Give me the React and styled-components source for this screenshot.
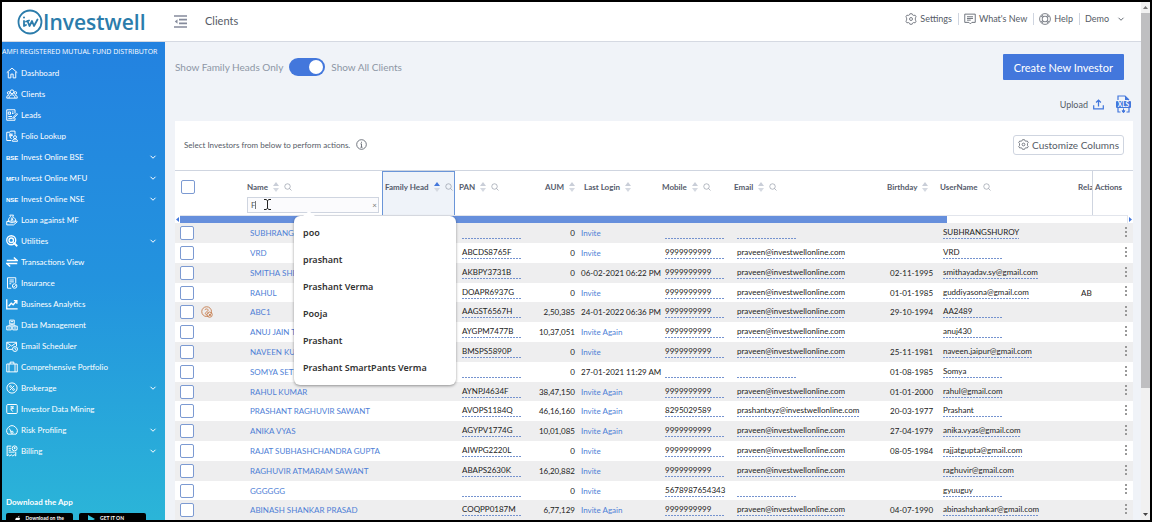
import React, { useState } from "react";
import styled, { createGlobalStyle, css } from "styled-components";

const GlobalStyle = createGlobalStyle`
  * {
    box-sizing: border-box;
  }

  body {
    margin: 0;
    background: #000;
    font-family: Lato, "Open Sans", sans-serif;
    color: #444;
  }

  button, input {
    font-family: inherit;
  }
`;

const COLOR = {
  blue: "#4377dc",
  link: "#4f7fd6",
  line: "#cfd5e0",
  text: "#555b66",
};

const menu = [
  { label: "Dashboard", icon: "home" },
  { label: "Clients", icon: "clients" },
  { label: "Leads", icon: "leads" },
  { label: "Folio Lookup", icon: "folio" },
  { label: "Invest Online BSE", tag: "BSE", open: true },
  { label: "Invest Online MFU", tag: "MFU", open: true },
  { label: "Invest Online NSE", tag: "NSE", open: true },
  { label: "Loan against MF", icon: "loan" },
  { label: "Utilities", icon: "utilities", open: true },
  { label: "Transactions View", icon: "transactions" },
  { label: "Insurance", icon: "insurance" },
  { label: "Business Analytics", icon: "analytics" },
  { label: "Data Management", icon: "data" },
  { label: "Email Scheduler", icon: "email" },
  { label: "Comprehensive Portfolio", icon: "portfolio" },
  { label: "Brokerage", icon: "brokerage", open: true },
  { label: "Investor Data Mining", icon: "mining" },
  { label: "Risk Profiling", icon: "risk", open: true },
  { label: "Billing", icon: "billing", open: true },
];

const P = "praveen@investwellonline.com";
const N = "9999999999";

const clients = [
  ["SUBHRANGSHU ROY", "", "0", "Invite", "", "", "", "SUBHRANGSHUROY"],
  ["VRD", "ABCDS8765F", "0", "Invite", N, P, "", "VRD"],
  ["SMITHA SHETTY", "AKBPY3731B", "0", "06-02-2021 06:22 PM", N, P, "02-11-1995", "smithayadav.sy@gmail.com"],
  ["RAHUL", "DOAPR6937G", "0", "Invite", N, P, "01-01-1985", "guddiyasona@gmail.com", "ABC1"],
  ["ABC1", "AAGST6567H", "2,50,385", "24-01-2022 06:36 PM", N, P, "29-10-1994", "AA2489"],
  ["ANUJ JAIN T", "AYGPM7477B", "10,37,051", "Invite Again", N, P, "", "anuj430"],
  ["NAVEEN KUMAR", "BMSPS5890P", "0", "Invite", N, P, "25-11-1981", "naveen.jaipur@gmail.com"],
  ["SOMYA SETHI", "", "0", "27-01-2021 11:29 AM", "", "", "01-08-1985", "Somya"],
  ["RAHUL KUMAR", "AYNPJ4634F", "38,47,150", "Invite Again", N, P, "01-01-2000", "rahul@gmail.com"],
  ["PRASHANT RAGHUVIR SAWANT", "AVOPS1184Q", "46,16,160", "Invite Again", "8295029589", "prashantxyz@investwellonline.com", "20-03-1977", "Prashant"],
  ["ANIKA VYAS", "AGYPV1774G", "10,01,085", "Invite Again", N, P, "27-04-1979", "anika.vyas@gmail.com"],
  ["RAJAT SUBHASHCHANDRA GUPTA", "AIWPG2220L", "0", "Invite", N, P, "08-05-1984", "rajjatgupta@gmail.com"],
  ["RAGHUVIR ATMARAM SAWANT", "ABAPS2630K", "16,20,882", "Invite", N, P, "", "raghuvir@gmail.com"],
  ["GGGGGG", "", "0", "Invite", "5678987654343", "", "", "gyuuguy"],
  ["ABINASH SHANKAR PRASAD", "COQPP0187M", "6,77,129", "Invite Again", N, P, "04-07-1990", "abinashshankar@gmail.com"],
];

const suggestions = [
  "poo",
  "prashant",
  "Prashant Verma",
  "Pooja",
  "Prashant",
  "Prashant SmartPants Verma",
];

const shapes = {
  home: <path d="M1 7.5 8 1.5l7 6M3 6.500V14.500h3.500V9.500h3v5H13V6.500" />,
  clients: (
    <>
      <circle cx="8" cy="5" r="2.500" />
      <circle cx="3.500" cy="6.500" r="1.700" />
      <circle cx="12.500" cy="6.500" r="1.700" />
      <path d="M4 13.500c0-6 8-6 8 0zM4 13.500H1c0-3 1-4 3-4M12 13.500h3c0-3-1-4-3-4" />
    </>
  ),
  leads: (
    <>
      <path d="M12 6V1H1v14h11v-3M3 4h3v3H3zM8 4h2M8 6h2M3 10h5M3 12.500h5" />
      <path d="m9.500 11 5-5 1 1-5 5-1.500.5z" />
    </>
  ),
  folio: (
    <>
      <path d="M7 14H1V3h4l1-1.500h6V6M4 5.500h5M4 7.500h5M5 5.500c4 0 3 3.500 0 3.500l2.500 3" />
      <circle cx="12" cy="9.500" r="2" />
      <path d="M8.500 15c0-4 7-4 7 0z" />
    </>
  ),
  loan: (
    <>
      <path d="M6 3.500 5 1.500h5l-1 2c3 2 4 3.500 4 6H3c0-2.500 1-4 3-6zM6.500 5.500h3M6.500 7h3L7 9" />
      <path d="M1 10h3l2 1.500h4l4-2 1 1-5 4H1z" />
    </>
  ),
  utilities: (
    <>
      <circle cx="7" cy="7" r="6" strokeWidth="1.800" />
      <circle cx="7" cy="7" r="3" strokeWidth="1.800" />
      <path d="m10 10 5 5" strokeWidth="2.400" />
    </>
  ),
  transactions: (
    <path d="M1 6h14l-4.500-4M15 10H1l4.500 4" strokeWidth="2" />
  ),
  insurance: (
    <>
      <path d="M7 15H2V1h11v7M4.500 4h6M4.500 6.500h6M4.500 9H7" />
      <circle cx="11.500" cy="12" r="3" />
      <path d="m10 12 1 1 2-2" />
    </>
  ),
  analytics: (
    <path d="M1 1.500v13h14.500M3.500 11l3.500-4 2.500 2L14 4M10.500 3.500H14.500V7.500" strokeWidth="1.800" />
  ),
  data: (
    <path d="M5 1.500h6v5H5zM1 9.500h6v5H1zM9 9.500h6v5H9zM8 6.500v2M4 9.500V8h8v1.500M6.500 3.500h3M2.500 12h3M10.500 12h3" />
  ),
  email: (
    <>
      <path d="M8 12.500H1V3h13v5M1 3.500 7.500 8 14 3.500M1 12l4.500-4.500" />
      <circle cx="12" cy="12" r="3.300" />
      <path d="M12 10v2l1.500.8" />
    </>
  ),
  portfolio: <path d="M1 4h14v10.500H1zM5.500 4V1.500h5V4M4 4v10.500M12 4v10.500" />,
  brokerage: (
    <>
      <circle cx="8" cy="8" r="6.800" />
      <path d="m5 11 6-6" />
      <circle cx="6" cy="6" r="1.200" />
      <circle cx="10" cy="10" r="1.200" />
    </>
  ),
  mining: (
    <>
      <rect x="1" y="2" width="14" height="12" rx="1.500" />
      <path d="M6 5h4.500M6 7h4.500M6.500 5c3 0 3 3.500 0 3.500l2.500 3" />
    </>
  ),
  risk: (
    <>
      <path d="M2.500 13.500a6.900 6.900 0 1 1 11 0zM7 11 4.500 6" />
      <circle cx="8" cy="11" r="1.500" />
    </>
  ),
  billing: (
    <>
      <path d="M9 14.500 7 13l-2 1.500L3 13l-1.500 1.500V1.500H7M3.500 4.500h3M3.500 7h3M3.500 9.500h8M9 14.500l2-1.500 2 1.500V9" />
      <circle cx="11.500" cy="4.500" r="3.300" />
      <path d="M10.500 3.500h2M10.500 4.800h2" />
    </>
  ),
  gear: (
    <>
      <path d="M6.500 1h3l.5 1.500 1.700.8 1.700-.5 1.500 2.400L13.800 6.500v3l1.100 1.300-1.500 2.400-1.700-.5-1.700.8L9.500 15h-3L6 13.500l-1.700-.8-1.700.5L1.100 10.800 2.200 9.500v-3L1.100 5.200l1.500-2.400 1.700.5L6 2.500z" />
      <circle cx="8" cy="8" r="2" />
    </>
  ),
  news: <path d="M1 1.500h14v11h-4.500l-2 2-2-2H1zM4 5h8M4 7.300h8M4 9.500h5" />,
  help: (
    <>
      <circle cx="8" cy="8" r="7.200" />
      <circle cx="8" cy="8" r="3.800" />
      <path d="m2.500 4.500 2.500 1M4.500 2.500l1 2.500M13.500 4.500 11 5.500M11.500 2.500l-1 2.500M2.500 11.500l2.500-1M4.500 13.500l1-2.500M13.500 11.500l-2.500-1M11.500 13.500l-1-2.500" />
    </>
  ),
  chevron: <path d="m3 5.500 5 5 5-5" />,
  search: (
    <>
      <circle cx="7" cy="7" r="5.500" />
      <path d="m11 11 4 4" />
    </>
  ),
  info: (
    <>
      <circle cx="8" cy="8" r="7" />
      <path d="M8 7v5M8 4v1.500M6.500 12h3M6.500 7H8" />
    </>
  ),
  upload: <path d="M1 9v5.500h14V9M8 11V2M4.500 5 8 1.500 11.500 5" />,
  family: (
    <>
      <circle cx="7.500" cy="7.500" r="6.500" />
      <path d="M5 5c4-3 6 1 3 2.500S5 11 8 12" />
      <circle cx="11.500" cy="11.500" r="3.500" />
      <path d="m10 10 3 3" />
    </>
  ),
};

const Icon = ({ name, size = 11, stroke = 1.3, color }) => (
  <Glyph
    width={size}
    height={size}
    viewBox="0 0 16 16"
    fill="none"
    stroke={color || "currentColor"}
    strokeWidth={stroke}
    aria-hidden="true"
  >
    {shapes[name]}
  </Glyph>
);

const Sort = ({ active }) => (
  <Glyph width="6" height="10" viewBox="0 0 6 10" aria-hidden="true">
    <path d="M0 4h6L3 0z" fill={active ? COLOR.blue : "#c9ced8"} />
    <path d="M0 6h6L3 10z" fill="#d5d9e1" />
  </Glyph>
);

const Heading = ({ label, sort, search, active }) => (
  <HeadLine>
    <span>{label}</span>
    {sort && <Sort active={active} />}
    {search && <Icon name="search" size={8} color="#8e95a3" />}
  </HeadLine>
);

const Logo = () => (
  <LogoLink href="#home">
    <svg width="26" height="26" viewBox="0 0 26 26" fill="none" stroke="#2b7cab" aria-hidden="true">
      <circle cx="13" cy="13" r="11.500" strokeWidth="1.800" />
      <path d="M7 12v5l2-1M10.500 12l2 5 2.500-5 2 5 3.500-6.500M9 12.500l3-1" strokeWidth="1.800" strokeLinecap="round" strokeLinejoin="round" />
      <circle cx="7" cy="8.500" r="1" fill="#2b7cab" stroke="none" />
    </svg>
    <span>Investwell</span>
  </LogoLink>
);

const Sidebar = () => (
  <SideNav>
    <Banner>AMFI REGISTERED MUTUAL FUND DISTRIBUTOR</Banner>
    <MenuList>
      {menu.map((item) => (
        <li key={item.label}>
          <MenuLink href="#menu">
            <MenuIcon>
              {item.tag ? <Tag>{item.tag}</Tag> : <Icon name={item.icon} size={12} />}
            </MenuIcon>
            <span>{item.label}</span>
            {item.open && <Icon name="chevron" size={8} stroke={2} />}
          </MenuLink>
        </li>
      ))}
    </MenuList>
    <Download>
      <h2>Download the App</h2>
      <Stores>
        <Store href="#ios">
          <svg width="7" height="8" viewBox="0 0 7 8" fill="#fff" aria-hidden="true">
            <path d="M4 2c0-1 .7-2 1.500-2C5.500 1 5 2 4 2zM1 3c1-1 1.500-.5 2.500-.5S5 2 6.500 3c-1 1-1 2 0 3-1 2-2 2-3 1.500-1 .5-1.500.5-2.500-1s-.8-2.500 0-3.500z" />
          </svg>
          Download on the
        </Store>
        <Store href="#android">
          <svg width="7" height="8" viewBox="0 0 7 8" aria-hidden="true">
            <path d="M0 0v8l7-4z" fill="#35c3dd" />
          </svg>
          GET IT ON
        </Store>
      </Stores>
    </Download>
  </SideNav>
);

const ClientRow = ({ client }) => {
  const [name, pan, aum, login, mobile, email, birthday, user, relation] = client;
  return (
    <Row>
      <Cell $left={5}>
        <Check type="checkbox" aria-label={`Select ${name}`} />
      </Cell>
      <Cell $left={2}>
        {name === "ABC1" && <Icon name="family" size={12} color="#c98457" />}
      </Cell>
      <Cell>
        <TextLink href="#client">{name}</TextLink>
      </Cell>
      <Cell />
      <Cell>
        <Editable>{pan}</Editable>
      </Cell>
      <Cell $right>{aum}</Cell>
      <Cell $left={1}>
        {login.startsWith("Invite") ? <TextLink href="#invite">{login}</TextLink> : login}
      </Cell>
      <Cell>
        <Editable>{mobile}</Editable>
      </Cell>
      <Cell>
        <Editable>{email}</Editable>
      </Cell>
      <Cell $right>{birthday}</Cell>
      <Cell>
        <Editable>{user}</Editable>
      </Cell>
      <Cell $clip>{relation}</Cell>
      <Cell $right>
        <RowMenu aria-label={`Actions for ${name}`}>
          <svg width="3" height="11" viewBox="0 0 3 11" fill="#999" aria-hidden="true">
            <rect y="0" width="2" height="2" />
            <rect y="4" width="2" height="2" />
            <rect y="8" width="2" height="2" />
          </svg>
        </RowMenu>
      </Cell>
    </Row>
  );
};

const ClientTable = () => {
  const [query, setQuery] = useState("F");
  return (
    <Table>
      <colgroup>
        {[24, 44, 139, 73, 73, 52, 78, 72, 153, 53, null, 18, 41].map((width, i) => (
          <Column key={i} $width={width} />
        ))}
      </colgroup>
      <thead>
        <tr>
          <HeadCell $flush>
            <Check type="checkbox" aria-label="Select all" />
          </HeadCell>
          <HeadCell />
          <HeadCell>
            <Heading label="Name" sort search />
            <Filter>
              <FilterInput
                aria-label="Filter by name"
                value={query}
                onChange={(e) => setQuery(e.target.value)}
              />
              <Clear aria-label="Clear filter" onClick={() => setQuery("")}>
                ×
              </Clear>
              <Pointer width="16" height="11" viewBox="0 0 16 11" fill="none" aria-hidden="true">
                <path d="M.5 2v8" stroke="#777" />
                <path d="M9 .5h2l1.500 1L14 .5h2M9 10.500h2l1.500-1 1.500 1h2M12.500 1.500v8" stroke="#222" />
              </Pointer>
              <Suggestions>
                {suggestions.map((s) => (
                  <li key={s}>{s}</li>
                ))}
              </Suggestions>
            </Filter>
          </HeadCell>
          <HeadCell $active>
            <Heading label="Family Head" sort search active />
          </HeadCell>
          <HeadCell>
            <Heading label="PAN" sort search />
          </HeadCell>
          <HeadCell $right>
            <Heading label="AUM" sort />
          </HeadCell>
          <HeadCell>
            <Heading label="Last Login" sort />
          </HeadCell>
          <HeadCell>
            <Heading label="Mobile" sort search />
          </HeadCell>
          <HeadCell>
            <Heading label="Email" sort search />
          </HeadCell>
          <HeadCell>
            <Heading label="Birthday" sort />
          </HeadCell>
          <HeadCell>
            <Heading label="UserName" search />
          </HeadCell>
          <HeadCell $clip>
            <Heading label="Relation" />
          </HeadCell>
          <HeadCell $pinned>
            <Heading label="Actions" />
          </HeadCell>
        </tr>
        <tr>
          <ScrollCell colSpan="13">
            <ScrollLine>
              <svg width="5" height="7" viewBox="0 0 5 7" aria-hidden="true">
                <path d="M4 1v5L1 3.500z" fill={COLOR.blue} />
              </svg>
              <ScrollTrack>
                <ScrollThumb />
              </ScrollTrack>
              <svg width="5" height="7" viewBox="0 0 5 7" aria-hidden="true">
                <path d="M1 1v5l3-2.500z" fill={COLOR.blue} />
              </svg>
            </ScrollLine>
          </ScrollCell>
        </tr>
      </thead>
      <tbody>
        {clients.map((client) => (
          <ClientRow key={client[0]} client={client} />
        ))}
      </tbody>
    </Table>
  );
};

const App = () => (
  <Screen>
    <GlobalStyle />
    <Page>
      <TopBar>
        <Logo />
        <Collapse aria-label="Collapse menu">
          <svg width="13" height="13" viewBox="0 0 13 13" stroke="#858b9c" strokeWidth="1.700" aria-hidden="true">
            <path d="M0 1h13M5 4.700h8M5 8.300h8M0 12h13" />
            <path d="M3.500 4.200v4.500L.8 6.500z" fill="#858b9c" stroke="none" />
          </svg>
        </Collapse>
        <Title>Clients</Title>
        <TopLinks>
          <TopLink href="#settings">
            <Icon name="gear" size={12} stroke={1} /> Settings
          </TopLink>
          <TopLink href="#news">
            <Icon name="news" size={12} stroke={1.1} /> What's New
          </TopLink>
          <TopLink href="#help">
            <Icon name="help" size={12} stroke={1} /> Help
          </TopLink>
          <TopLink href="#account" $wide>
            Demo <Icon name="chevron" size={8} stroke={1.8} />
          </TopLink>
        </TopLinks>
      </TopBar>
      <Body>
        <Sidebar />
        <Main>
          <Controls>
            <SwitchLabel>
              Show Family Heads Only
              <Switch type="checkbox" role="switch" defaultChecked />
              Show All Clients
            </SwitchLabel>
            <Primary>Create New Investor</Primary>
          </Controls>
          <Exports>
            <PlainButton>
              Upload <Icon name="upload" size={11} stroke={1.8} color={COLOR.blue} />
            </PlainButton>
            <PlainButton aria-label="Download XLS">
              <svg width="15" height="19" viewBox="0 0 15 19" aria-hidden="true">
                <path d="M2 5V1h7l4 4M2 13v4h2.500M13 13v4h-2.500" fill="none" stroke={COLOR.blue} strokeWidth="1.200" />
                <path d="M9 1v4h4z" fill={COLOR.blue} />
                <rect y="6" width="15" height="7" rx="1" fill={COLOR.blue} />
                <text x="7.500" y="12" textAnchor="middle" fontSize="6.500" fontWeight="700" fill="#fff">XLS</text>
                <path d="M7.500 13.500v3M6 15.800l1.500 2 1.500-2z" stroke={COLOR.blue} fill={COLOR.blue} />
              </svg>
            </PlainButton>
          </Exports>
          <Card>
            <CardBar>
              <span>Select Investors from below to perform actions.</span>
              <Icon name="info" size={11} stroke={1.2} />
              <Customize>
                <Icon name="gear" size={11} stroke={1.1} /> Customize Columns
              </Customize>
            </CardBar>
            <ClientTable />
          </Card>
        </Main>
      </Body>
    </Page>
    <PageScroll>
      <svg width="9" height="11" viewBox="0 0 9 11" aria-hidden="true">
        <path d="M2 7h5L4.500 4z" fill="#777" />
      </svg>
      <PageThumb />
      <svg width="9" height="11" viewBox="0 0 9 11" aria-hidden="true">
        <path d="M2 4h5L4.500 7z" fill="#444" />
      </svg>
    </PageScroll>
  </Screen>
);

export default App;

const Screen = styled.div`
  height: 100vh;
  border: 2px solid #000;
  display: flex;
  overflow: hidden;
  background: #f0f3f8;
`;

const Page = styled.div`
  flex: 1;
  min-width: 0;
  display: flex;
  flex-direction: column;
`;

const Glyph = styled.svg`
  flex: none;
  display: block;
`;

const TopBar = styled.header`
  height: 40px;
  flex: none;
  display: flex;
  align-items: center;
  padding: 0 16px 0 15px;
  background: #fff;
  border-bottom: 1px solid #d5d9e2;
`;

const LogoLink = styled.a`
  width: 157px;
  display: flex;
  align-items: center;
  color: #2b7cab;
  font-family: "Open Sans", sans-serif;
  font-size: 21px;
  font-weight: 600;
  line-height: 26px;
  text-decoration: none;
`;

const Collapse = styled.button`
  display: flex;
  padding: 0;
  border: 0;
  background: none;
`;

const Title = styled.h1`
  margin: 0 0 0 18px;
  padding-bottom: 2px;
  font-size: 11px;
  font-weight: 400;
  color: #555b66;
`;

const TopLinks = styled.nav`
  display: flex;
  align-items: center;
  margin-left: auto;
  padding-bottom: 6px;
`;

const TopLink = styled.a`
  display: flex;
  align-items: center;
  gap: ${({ $wide }) => ($wide ? 8 : 3)}px;
  color: ${COLOR.text};
  font-size: 9px;
  line-height: 12px;
  text-decoration: none;

  & + & {
    margin-left: 6px;
    padding-left: 5px;
    border-left: 1px solid ${COLOR.line};
  }
`;

const Body = styled.div`
  flex: 1;
  min-height: 0;
  display: flex;
`;

const SideNav = styled.aside`
  width: 163px;
  flex: none;
  display: flex;
  flex-direction: column;
  overflow: hidden;
  color: #fff;
  background: linear-gradient(#2382e0, #2393de 50%, #2bb5d8);
`;

const Banner = styled.p`
  margin: 0;
  font-family: "Open Sans", sans-serif;
  font-size: 7px;
  line-height: 20px;
  white-space: nowrap;
`;

const MenuList = styled.ul`
  margin: 0;
  padding: 0;
  list-style: none;
`;

const MenuLink = styled.a`
  height: 21px;
  display: flex;
  align-items: center;
  gap: 3px;
  padding: 0 8px 0 4px;
  color: #fff;
  font-size: 8px;
  text-decoration: none;

  span + svg {
    margin-left: auto;
  }
`;

const MenuIcon = styled.span`
  width: 12px;
  flex: none;
`;

const Tag = styled.b`
  font-family: "Liberation Sans", sans-serif;
  font-size: 6px;
`;

const Download = styled.section`
  margin-top: 34px;
  padding: 0 4px;

  h2 {
    margin: 0;
    font-size: 8px;
    line-height: 14px;
  }
`;

const Stores = styled.div`
  display: flex;
  gap: 6px;
  margin-top: 4px;
`;

const Store = styled.a`
  width: 67px;
  height: 20px;
  display: flex;
  gap: 5px;
  padding: 2px 9px;
  border-radius: 2px;
  background: #000;
  color: #fff;
  font-size: 5px;
  font-weight: 700;
  line-height: 6px;
  text-decoration: none;
  white-space: nowrap;
`;

const Main = styled.main`
  flex: 1;
  min-width: 0;
  padding: 12px 8px 0 10px;
`;

const Controls = styled.div`
  display: flex;
  justify-content: space-between;
  padding-right: 9px;
`;

const SwitchLabel = styled.label`
  height: 26px;
  display: flex;
  align-items: center;
  gap: 6px;
  color: #8d96a5;
  font-size: 10px;
`;

const Switch = styled.input`
  appearance: none;
  width: 36px;
  height: 18px;
  margin: 0;
  padding: 2px;
  display: flex;
  justify-content: flex-end;
  border-radius: 9px;
  background: ${COLOR.blue};

  &::before {
    content: "";
    width: 14px;
    height: 14px;
    border-radius: 50%;
    background: #fff;
  }

  &:not(:checked) {
    justify-content: flex-start;
    background: #a9b1bf;
  }
`;

const Primary = styled.button`
  height: 26px;
  padding: 0 11px;
  border: 0;
  border-radius: 1px;
  background: ${COLOR.blue};
  color: #fff;
  font-size: 11px;
`;

const Exports = styled.div`
  height: 41px;
  display: flex;
  align-items: center;
  justify-content: flex-end;
  gap: 12px;
  padding: 8px 2px 0 0;
`;

const PlainButton = styled.button`
  display: flex;
  align-items: center;
  gap: 5px;
  padding: 0;
  border: 0;
  background: none;
  color: ${COLOR.text};
  font-size: 9px;
`;

const Card = styled.section`
  background: #fff;
`;

const CardBar = styled.div`
  height: 49px;
  display: flex;
  align-items: center;
  gap: 6px;
  padding: 0 9px 2px;
  color: ${COLOR.text};
  font-size: 8px;
`;

const Customize = styled.button`
  height: 20px;
  display: flex;
  align-items: center;
  gap: 3px;
  margin-left: auto;
  padding: 0 4px;
  border: 1px solid ${COLOR.line};
  border-radius: 3px;
  background: #fff;
  color: ${COLOR.text};
  font-size: 10px;
`;

const Table = styled.table`
  width: 100%;
  table-layout: fixed;
  border-spacing: 0;
  border-top: 1px solid ${COLOR.line};
  font-size: 8px;
  color: #222;
`;

const Column = styled.col`
  width: ${({ $width }) => ($width ? `${$width}px` : "auto")};
`;

const HeadCell = styled.th`
  height: 44px;
  padding: ${({ $flush }) => ($flush ? "9px 0 0 6px" : "10px 0 0 4px")};
  vertical-align: top;
  text-align: left;
  font-weight: 700;
  color: #555b6b;

  ${({ $right }) =>
    $right &&
    css`
      padding-right: 5px;

      > div {
        justify-content: flex-end;
      }
    `}

  ${({ $clip }) =>
    $clip &&
    css`
      overflow: hidden;
    `}

  ${({ $active }) =>
    $active &&
    css`
      padding-top: 9px;
      padding-left: 2px;
      background: #eff3f9;
      border: 1px solid #6a95d8;
      border-width: 1px 1px 0;
    `}

  ${({ $pinned }) =>
    $pinned &&
    css`
      padding-left: 2px;
      border-left: 1px solid ${COLOR.line};
    `}
`;

const HeadLine = styled.div`
  height: 12px;
  display: flex;
  align-items: center;
  gap: 5px;
  white-space: nowrap;
`;

const Filter = styled.div`
  position: relative;
  width: 132px;
  height: 16px;
  margin-top: 4px;
  display: flex;
`;

const FilterInput = styled.input`
  width: 100%;
  padding: 0 12px 0 3px;
  border: 1px solid ${COLOR.line};
  background: #fbfbfd;
  color: #555;
  font-size: 8px;
  outline: none;
`;

const Clear = styled.button`
  position: absolute;
  right: 2px;
  top: 3px;
  padding: 0;
  border: 0;
  background: none;
  color: #777;
  font-size: 8px;
  line-height: 10px;
`;

const Pointer = styled.svg`
  position: absolute;
  left: 8px;
  top: 2px;
`;

const Suggestions = styled.ul`
  position: absolute;
  z-index: 2;
  left: 47px;
  top: 19px;
  width: 162px;
  margin: 0;
  padding: 3px 9px 4px;
  list-style: none;
  border-radius: 6px;
  background: #fff;
  box-shadow: 0 1px 3px rgba(0, 0, 0, 0.4);
  font-family: "Noto Sans", sans-serif;
  font-size: 9px;
  font-weight: 600;
  line-height: 27px;
  color: #333;

  &::before {
    content: "";
    position: absolute;
    left: 9px;
    top: -5px;
    border: 6px solid transparent;
    border-top: 0;
    border-bottom: 5px solid #fff;
  }
`;

const ScrollCell = styled.td`
  padding: 0;
`;

const ScrollLine = styled.div`
  height: 8px;
  display: flex;
  align-items: center;
`;

const ScrollTrack = styled.div`
  flex: 1;
  height: 8px;
  border: 1px solid #e2e5ec;
  border-width: 1px 1px 0 0;
`;

const ScrollThumb = styled.div`
  width: 81%;
  height: 7px;
  background: #668fdc;
`;

const Row = styled.tr`
  background: #fff;

  td {
    height: 20px;
  }

  &:nth-child(odd) {
    background: #eeeeef;
  }

  &:nth-child(5n - 1) td {
    height: 19px;
  }
`;

const Cell = styled.td`
  padding: 0 0 0 ${({ $left = 7 }) => $left}px;
  white-space: nowrap;

  ${({ $right }) =>
    $right &&
    css`
      padding-right: 5px;
      text-align: right;
    `}

  ${({ $clip }) =>
    $clip &&
    css`
      overflow: hidden;
    `}
`;

const Check = styled.input`
  appearance: none;
  display: block;
  width: 14px;
  height: 14px;
  margin: 0;
  border: 1px solid #7c9ad2;
  border-radius: 2px;
  background: #fff;

  &:checked {
    background: ${COLOR.blue};
  }
`;

const TextLink = styled.a`
  color: ${COLOR.link};
  text-decoration: none;
`;

const Editable = styled.span`
  display: inline-block;
  min-width: 60px;
  height: 12px;
  line-height: 11px;
  vertical-align: middle;
  background: repeating-linear-gradient(90deg, #7593cf 0 2px, transparent 2px 3px) bottom / 100% 1px no-repeat;
`;

const RowMenu = styled.button`
  padding: 0;
  border: 0;
  background: none;

  svg {
    display: block;
  }
`;

const PageScroll = styled.div`
  width: 9px;
  flex: none;
  display: flex;
  flex-direction: column;
  background: #f1f1f1;
`;

const PageThumb = styled.div`
  height: 375px;
  margin-bottom: auto;
  background: #bfbfc1;
`;
